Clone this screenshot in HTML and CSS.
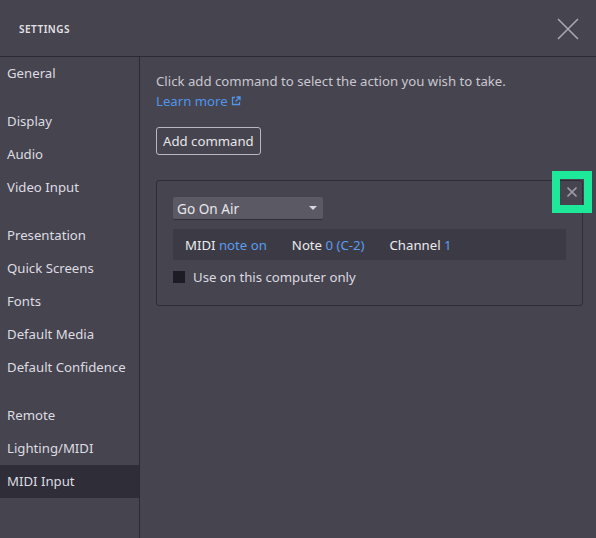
FILE: index.html
```html
<!DOCTYPE html>
<html lang="en">
<head>
    <meta charset="UTF-8">
    <meta name="viewport" content="width=device-width, initial-scale=1.0">
    <title>Settings</title>
    <link rel="stylesheet" href="styles.css">
</head>
<body>
    <div class="window">
        <div class="header">
            <span class="title">SETTINGS</span>
            <button class="close-btn" aria-label="Close">
                <svg width="22" height="22" viewBox="0 0 22 22">
                    <path d="M1 1 L21 21 M21 1 L1 21" stroke="#a9a8b0" stroke-width="1.6" fill="none"/>
                </svg>
            </button>
        </div>
        <div class="main">
            <div class="sidebar">
                <div class="nav-group">
                    <div class="nav-item">General</div>
                </div>
                <div class="nav-group">
                    <div class="nav-item">Display</div>
                    <div class="nav-item">Audio</div>
                    <div class="nav-item">Video Input</div>
                </div>
                <div class="nav-group">
                    <div class="nav-item">Presentation</div>
                    <div class="nav-item">Quick Screens</div>
                    <div class="nav-item">Fonts</div>
                    <div class="nav-item">Default Media</div>
                    <div class="nav-item">Default Confidence</div>
                </div>
                <div class="nav-group">
                    <div class="nav-item">Remote</div>
                    <div class="nav-item">Lighting/MIDI</div>
                    <div class="nav-item active">MIDI Input</div>
                </div>
            </div>
            <div class="content">
                <p class="intro">Click add command to select the action you wish to take.</p>
                <a class="learn-more" href="#">Learn more
                    <svg width="10" height="10" viewBox="0 0 10 10">
                        <path d="M4 1.5 H1.5 V8.5 H8.5 V6" stroke="currentColor" stroke-width="1.3" fill="none"/>
                        <path d="M5.5 1 H9 V4.5 M9 1 L4.5 5.5" stroke="currentColor" stroke-width="1.3" fill="none"/>
                    </svg>
                </a>
                <button class="add-btn">Add command</button>

                <div class="command-card">
                    <button class="remove-btn" aria-label="Remove">
                        <svg width="10" height="10" viewBox="0 0 10 10">
                            <path d="M0.5 0.5 L9.5 9.5 M9.5 0.5 L0.5 9.5" stroke="#9b9aa4" stroke-width="1.6" fill="none"/>
                        </svg>
                    </button>
                    <div class="select">
                        <span>Go On Air</span>
                        <span class="caret"></span>
                    </div>
                    <div class="midi-row">
                        <span class="field">MIDI <span class="value">note on</span></span>
                        <span class="field">Note <span class="value">0 (C-2)</span></span>
                        <span class="field">Channel <span class="value">1</span></span>
                    </div>
                    <label class="check-row">
                        <span class="checkbox"></span>
                        Use on this computer only
                    </label>
                </div>
            </div>
        </div>
    </div>
</body>
</html>
```

FILE: styles.css
```css
body {
    margin: 0;
    background-color: #46444f;
    font-family: "Noto Sans", "Open Sans", sans-serif;
    color: #dddce2;
    overflow: hidden;
}
.window {
    height: 538px;
    display: flex;
    flex-direction: column;
}
.header {
    height: 56px;
    border-bottom: 1px solid #2c2b34;
    display: flex;
    align-items: center;
    justify-content: space-between;
    padding: 0 17px 0 19px;
    flex-shrink: 0;
}
.title {
    font-size: 10px;
    font-weight: 600;
    letter-spacing: 0.5px;
    color: #e4e3e8;
    margin-top: 2px;
}
.close-btn {
    background: none;
    border: none;
    padding: 0;
    width: 22px;
    height: 22px;
    display: flex;
    margin-top: 2px;
}
.main {
    flex: 1;
    display: flex;
}
.sidebar {
    width: 139px;
    border-right: 1px solid #2c2b34;
    display: flex;
    flex-direction: column;
    gap: 15px;
    flex-shrink: 0;
}
.nav-item {
    height: 33px;
    line-height: 32px;
    padding: 0 7px;
    font-size: 13.2px;
    color: #dddce2;
    white-space: nowrap;
}
.nav-item.active {
    background-color: #2e2d38;
}
.content {
    flex: 1;
    padding: 14px 13px 0 16px;
    display: flex;
    flex-direction: column;
    align-items: flex-start;
}
.intro {
    margin: 0;
    font-size: 13.2px;
    line-height: 20px;
    color: #c9c8cf;
}
.learn-more {
    font-size: 13.2px;
    line-height: 20px;
    color: #5095ea;
    text-decoration: none;
    display: flex;
    align-items: center;
    gap: 3px;
}
.add-btn {
    margin-top: 16px;
    height: 28px;
    padding: 0 6px;
    background: none;
    border: 1px solid #b9b8c0;
    border-radius: 3px;
    font-family: inherit;
    font-size: 13.2px;
    color: #e6e5ea;
}
.command-card {
    position: relative;
    margin-top: 25px;
    align-self: stretch;
    height: 126px;
    box-sizing: border-box;
    border: 1px solid #2f2e37;
    border-radius: 3px;
    padding: 16px 16px 0 16px;
    display: flex;
    flex-direction: column;
}
.remove-btn {
    position: absolute;
    top: -2px;
    right: -2px;
    width: 24px;
    height: 26px;
    padding: 0;
    background: none;
    border: none;
    outline: 8px solid #1ee99a;
    display: flex;
    align-items: center;
    justify-content: center;
}
.select {
    width: 150px;
    height: 23px;
    box-sizing: border-box;
    background-color: #5b5963;
    border-radius: 2px;
    border-bottom: 1px solid #302f38;
    display: flex;
    align-items: center;
    justify-content: space-between;
    padding: 0 4px 0 4px;
    font-size: 13.6px;
    color: #e8e7ec;
}
.caret {
    width: 0;
    height: 0;
    border-left: 4px solid transparent;
    border-right: 4px solid transparent;
    border-top: 4px solid #d8d7dd;
    margin-right: 2px;
}
.midi-row {
    margin-top: 9px;
    height: 31px;
    background-color: #3c3b45;
    display: flex;
    align-items: center;
    gap: 25px;
    padding: 0 12px;
    font-size: 13.2px;
    color: #ebeaef;
}
.value {
    color: #5b9bee;
}
.check-row {
    margin-top: 7px;
    height: 20px;
    display: flex;
    align-items: center;
    gap: 8px;
    font-size: 13.2px;
    color: #dcdbe1;
}
.checkbox {
    width: 12px;
    height: 12px;
    background-color: #1d1c25;
}
```
